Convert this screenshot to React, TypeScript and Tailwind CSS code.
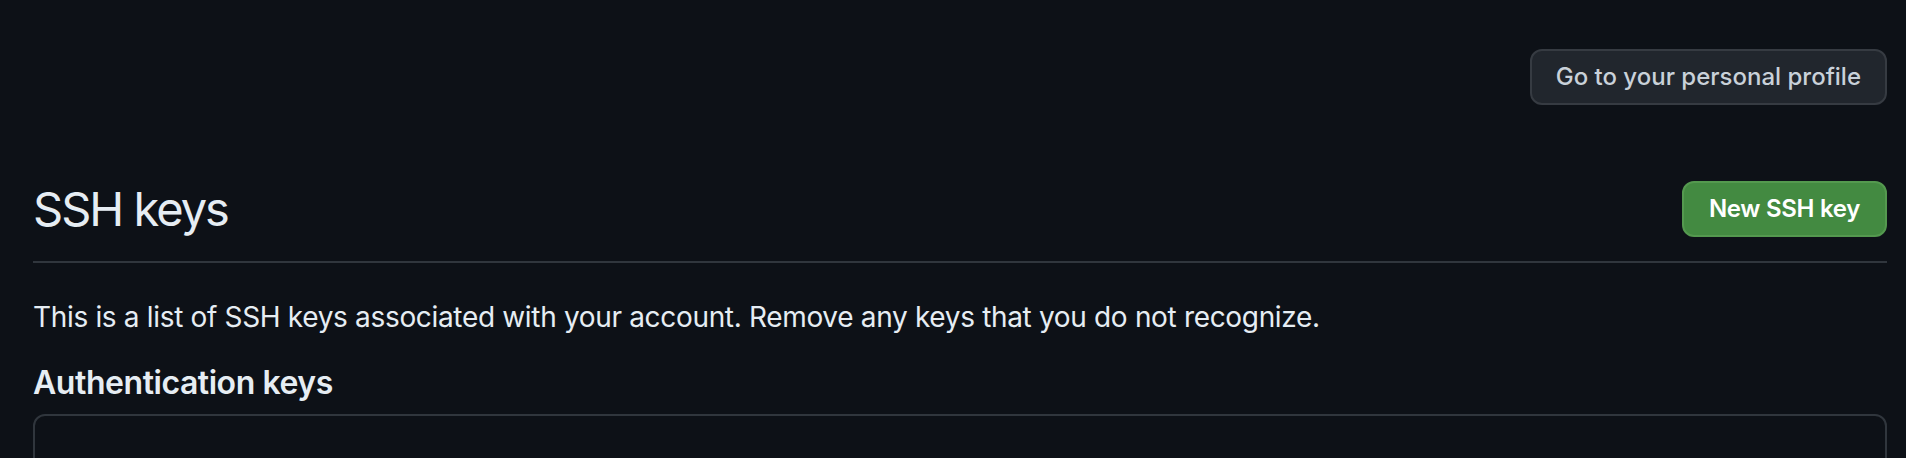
import React from "react";

export default function App() {
  return (
    <div
      className="min-h-[458px] w-full overflow-hidden bg-[#0d1117] pl-[33px] pr-[19px] text-[#e6edf3]"
      style={{ fontFamily: "Inter, 'Noto Sans', 'Liberation Sans', sans-serif" }}
    >
      <div className="flex justify-end pt-[49px]">
        <button className="h-[56px] rounded-[12px] border-2 border-[#363b42] bg-[#21262d] px-[24px] text-[24px] font-medium leading-none text-[#c9d1d9]">
          Go to your personal profile
        </button>
      </div>

      <div className="mt-[68px] flex items-center justify-between border-b-2 border-[#30363d] pb-[16px]">
        <h1 className="text-[47px] font-normal leading-[72px] tracking-[-2px]">SSH keys</h1>
        <button className="h-[56px] rounded-[12px] border-2 border-[#54994f] bg-[#438a41] px-[25px] text-[24px] font-semibold leading-none tracking-[-0.3px] text-white">
          New SSH key
        </button>
      </div>

      <p className="mt-[33px] text-[28px] leading-[42px] tracking-[-0.33px]">
        This is a list of SSH keys associated with your account. Remove any keys that you do not recognize.
      </p>

      <h3 className="mt-[21px] text-[32px] font-semibold leading-[48px] tracking-[-0.45px]">Authentication keys</h3>

      <div className="mt-[7px] h-[120px] rounded-[12px] border-2 border-[#30363d]" />
    </div>
  );
}
